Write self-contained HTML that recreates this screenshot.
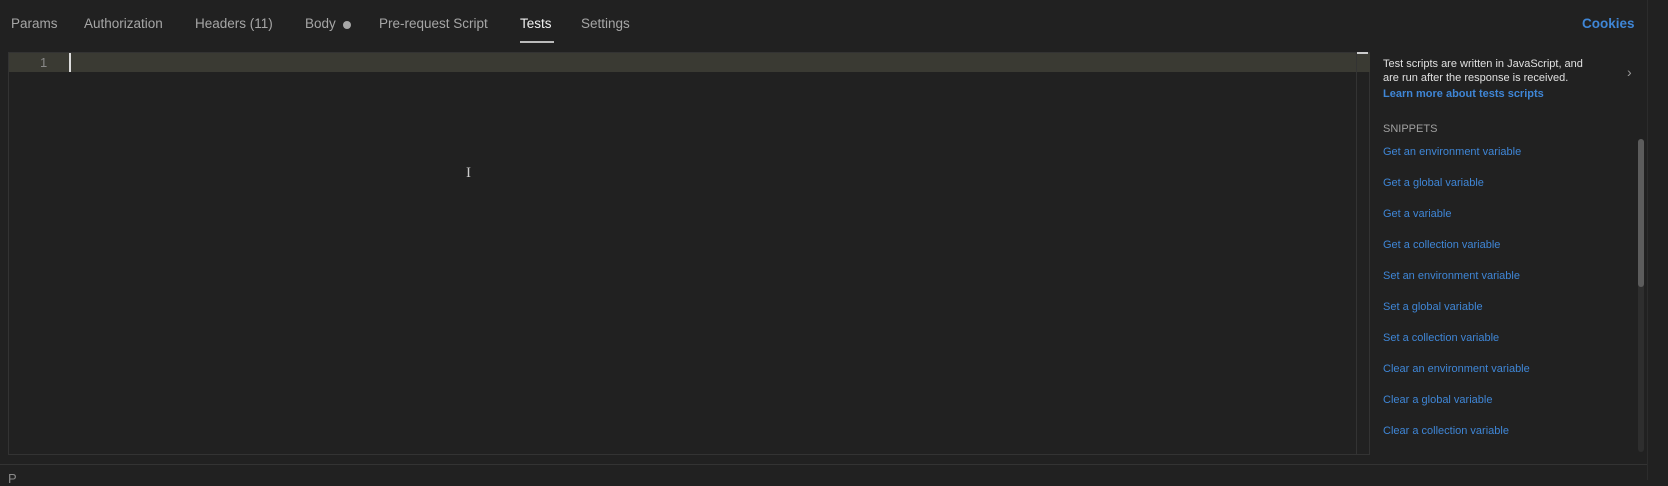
<!DOCTYPE html>
<html><head><style>
body{margin:0;width:1668px;height:480px;background:#212121;font-family:"Liberation Sans",sans-serif;position:relative;overflow:hidden;color:#a6a6a6}
.a{position:absolute;white-space:nowrap}
.tab{top:16px;font-size:13.5px;color:#a6a6a6}
.sn{left:1383px;font-size:11px;color:#3f86d6}
</style></head><body>
<div class="a tab" style="left:11px">Params</div>
<div class="a tab" style="left:84px">Authorization</div>
<div class="a tab" style="left:195px">Headers (11)</div>
<div class="a tab" style="left:305px">Body</div>
<div class="a" style="left:343px;top:21px;width:8px;height:8px;border-radius:50%;background:#a6a6a6"></div>
<div class="a tab" style="left:379px">Pre-request Script</div>
<div class="a tab" style="left:520px;color:#f0f0f0">Tests</div>
<div class="a" style="left:520px;top:41px;width:34px;height:2px;background:#bbb"></div>
<div class="a tab" style="left:581px">Settings</div>
<div class="a" style="left:1582px;top:16px;font-size:13.5px;font-weight:bold;color:#3f86d6">Cookies</div>

<div class="a" style="left:8px;top:52px;width:1362px;height:403px;border:1px solid #333;box-sizing:border-box"></div>
<div class="a" style="left:9px;top:53px;width:1347px;height:19px;background:#3a3a33"></div>
<div class="a" style="left:1356px;top:53px;width:14px;height:19px;background:#3a3a33"></div>
<div class="a" style="left:1356px;top:52px;width:1px;height:403px;background:#333"></div>
<div class="a" style="left:1357px;top:52px;width:11px;height:2px;background:#ccc"></div>
<div class="a" style="left:40px;top:55px;font-size:13px;color:#888">1</div>
<div class="a" style="left:69px;top:53px;width:2px;height:19px;background:#ddd"></div>
<div class="a" style="left:466px;top:165px;font-size:15px;color:#ccc;font-family:'Liberation Serif',serif">I</div>

<div class="a" style="left:1383px;top:57px;font-size:11px;color:#e0e0e0;line-height:14px">Test scripts are written in JavaScript, and<br>are run after the response is received.</div>
<div class="a" style="left:1383px;top:88px;font-size:11px;font-weight:bold;color:#3f86d6">Learn more about tests scripts</div>
<div class="a" style="left:1627px;top:64px;font-size:14px;color:#999">›</div>
<div class="a" style="left:1383px;top:123px;font-size:11px;color:#a0a0a0">SNIPPETS</div>
<div class="a sn" style="top:146px">Get an environment variable</div>
<div class="a sn" style="top:177px">Get a global variable</div>
<div class="a sn" style="top:208px">Get a variable</div>
<div class="a sn" style="top:239px">Get a collection variable</div>
<div class="a sn" style="top:270px">Set an environment variable</div>
<div class="a sn" style="top:301px">Set a global variable</div>
<div class="a sn" style="top:332px">Set a collection variable</div>
<div class="a sn" style="top:363px">Clear an environment variable</div>
<div class="a sn" style="top:394px">Clear a global variable</div>
<div class="a sn" style="top:425px">Clear a collection variable</div>
<div class="a" style="left:1638px;top:139px;width:6px;height:313px;border-radius:3px;background:#2e2e2e"></div>
<div class="a" style="left:1638px;top:139px;width:6px;height:148px;border-radius:3px;background:#5c5c5c"></div>
<div class="a" style="left:1647px;top:0;width:1px;height:480px;background:#2c2c2c"></div>
<div class="a" style="left:0;top:464px;width:1647px;height:1px;background:#333"></div>
<div class="a" style="left:8px;top:471px;font-size:13px;color:#888">P</div>
</body></html>
